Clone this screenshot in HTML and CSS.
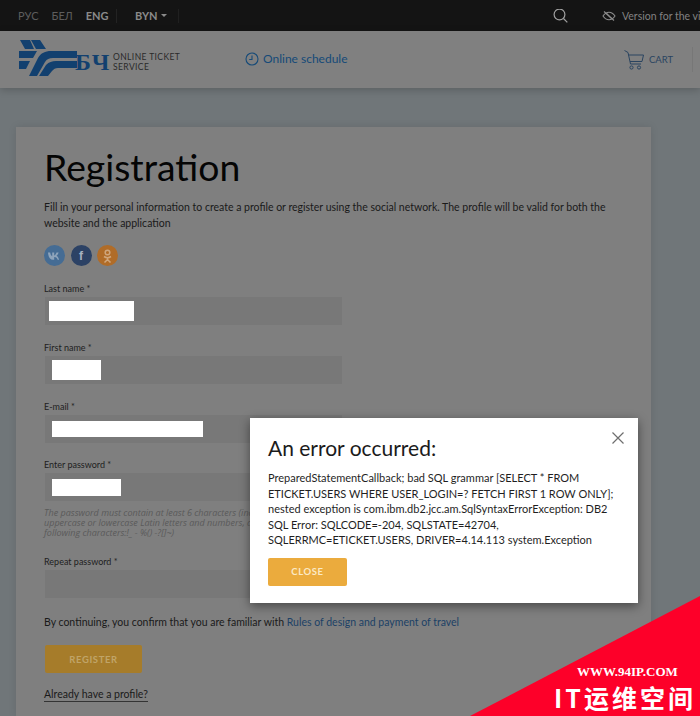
FILE: index.html
```html
<!DOCTYPE html>
<html lang="en">
<head>
<meta charset="utf-8">
<title>Registration</title>
<link rel="stylesheet" href="styles.css">
</head>
<body>
<div class="topbar">
  <div class="langs">
    <span class="lang">РУС</span>
    <span class="lang">БЕЛ</span>
    <span class="lang active">ENG</span>
  </div>
  <div class="currency">BYN<span class="caret"></span></div>
  <div class="top-right">
    <svg class="search-icon" width="15" height="15" viewBox="0 0 15 15" fill="none" stroke="#a0a0a0" stroke-width="1.200"><circle cx="6.500" cy="6.500" r="5.400"/><path d="M10.500 10.500l3.800 3.800"/></svg>
    <svg class="eye-icon" width="14" height="12" viewBox="0 0 14 12" fill="none" stroke="#8c8c8c" stroke-width="1.100"><path d="M1 6c2-3 4-3.800 6-3.800S11 3 13 6c-2 3-4 3.800-6 3.800S3 9 1 6z"/><path d="M4.500 3.500c2 2 3 3.500 5 5"/><path d="M2 1.500l10 9"/></svg>
    <span class="vision">Version for the visually impaired</span>
  </div>
</div>

<header class="header">
  <div class="logo">
    <svg width="58" height="38" viewBox="0 0 58 38" fill="#12406f">
      <path d="M1 1h10l4 9H6zM12 1h9l6 9H17z"/>
      <path d="M0 12h18l-4 7H0zM0 22h11l-4 8H0z"/>
      <path d="M10 37L19 19C22 14 26 12 32 12H58V19H34C30 19 28 20 26 23L18 37z"/>
      <path d="M20 37L27 26C30 23 33 22 37 22H58V29H39C36 29 35 30 33 32L29 37z"/>
    </svg>
    <span class="logo-mark">БЧ</span>
    <span class="logo-text">ONLINE TICKET<br>SERVICE</span>
  </div>
  <a class="schedule">
    <svg width="14" height="14" viewBox="0 0 14 14" fill="none" stroke="#154a78" stroke-width="1.100"><circle cx="7" cy="7" r="6"/><path d="M7 3.500V7.500H4.200"/></svg>
    Online schedule
  </a>
  <div class="cart">
    <svg width="20" height="20" viewBox="0 0 20 20" fill="none" stroke="#2a4460" stroke-width="1"><path d="M0.500 0.500l3.500 2 2.500 11.500H17"/><path d="M4.500 5H19.500l-1.500 6.500H6"/><circle cx="7.500" cy="17.500" r="1.600"/><circle cx="15" cy="17.500" r="1.600"/></svg>
    <span>CART</span>
  </div>
</header>

<main class="page">
  <section class="card">
    <h1 class="title">Registration</h1>
    <p class="intro">Fill in your personal information to create a profile or register using the social network. The profile will be valid for both the website and the application</p>
    <div class="socials">
      <span class="social vk">
        <svg width="13" height="8" viewBox="0 0 13 8" fill="#8ea4bb"><path d="M0 .5h2.200c.3 2 1.200 3.500 2 3.800V.5h2v3c1-.3 1.800-1.600 2.300-3h2.100c-.4 1.500-1.300 2.700-2.100 3.300.9.500 2 1.600 2.600 4H9.700c-.5-1.500-1.500-2.500-3.500-2.700v2.700H5C2 7.800.3 5 0 .5z"/></svg>
      </span>
      <span class="social fb">f</span>
      <span class="social ok">
        <svg width="9" height="14" viewBox="0 0 9 14" fill="none" stroke="#cfa67c" stroke-width="1.500"><circle cx="4.500" cy="3.500" r="2.300"/><path d="M1 7.500c2 1.300 5 1.300 7 0M4.500 9v1.500M1.500 13.500l3-3 3 3"/></svg>
      </span>
    </div>

    <div class="field">
      <label class="label">Last name *</label>
      <div class="input"><span class="redact redact-last"></span></div>
    </div>
    <div class="field">
      <label class="label">First name *</label>
      <div class="input"><span class="redact redact-first"></span></div>
    </div>
    <div class="field">
      <label class="label">E-mail *</label>
      <div class="input"><span class="redact redact-mail"></span></div>
    </div>
    <div class="field field-pass">
      <label class="label">Enter password *</label>
      <div class="input"><span class="redact redact-pass"></span></div>
      <p class="hint">The password must contain at least 6 characters (including<br>uppercase or lowercase Latin letters and numbers, and the<br>following characters:!_ - %() -?[]~)</p>
    </div>
    <div class="field field-repeat">
      <label class="label">Repeat password *</label>
      <div class="input"></div>
    </div>

    <p class="confirm">By continuing, you confirm that you are familiar with <a class="rules">Rules of design and payment of travel</a></p>
    <button class="btn btn-register">REGISTER</button>
    <a class="have-profile">Already have a profile?</a>
  </section>
</main>

<div class="modal">
  <svg class="close-x" width="12" height="12" viewBox="0 0 12 12" stroke="#6e6e6e" stroke-width="1.200"><path d="M.5.5l11 11M11.500.5l-11 11"/></svg>
  <h2 class="modal-title">An error occurred:</h2>
  <p class="modal-text">PreparedStatementCallback; bad SQL grammar [SELECT * FROM ETICKET.USERS WHERE USER_LOGIN=? FETCH FIRST 1 ROW ONLY]; nested exception is com.ibm.db2.jcc.am.SqlSyntaxErrorException: DB2 SQL Error: SQLCODE=-204, SQLSTATE=42704, SQLERRMC=ETICKET.USERS, DRIVER=4.14.113 system.Exception</p>
  <button class="btn btn-close">CLOSE</button>
</div>

<div class="watermark">
  <svg class="wm-tri" width="230" height="120" viewBox="0 0 230 120"><path d="M230 0V120H0z" fill="#fd0029"/></svg>
  <div class="wm-url">WWW.94IP.COM</div>
  <div class="wm-name">IT运维空间</div>
</div>
</body>
</html>
```

FILE: styles.css
```css
* { box-sizing: border-box; }
html, body { margin: 0; height: 716px; overflow: hidden; }
body { background: #707679; font-family: "Lato", sans-serif; color: #111; position: relative; }

.topbar { height: 31px; background: #141414; display: flex; align-items: center; padding-left: 18px; font-size: 11px; }
.langs { display: flex; gap: 13px; width: 99px; height: 14px; align-items: center; border-right: 1px solid #232323; }
.lang { color: #5d5d5d; }
.lang.active { color: #8a8a8a; font-weight: 700; }
.currency { width: 62px; height: 14px; padding-left: 18px; color: #8a8a8a; font-weight: 700; display: flex; align-items: center; gap: 3px; border-right: 1px solid #202020; }
.caret { width: 0; height: 0; border: 3px solid transparent; border-top: 3px solid #8a8a8a; border-bottom: 0; }
.top-right { margin-left: auto; display: flex; align-items: center; white-space: nowrap; width: 147px; flex: none; overflow: hidden; }
.search-icon { flex: none; margin-right: 34px; margin-top: -1px; }
.eye-icon { flex: none; margin-right: 6px; }
.vision { color: #828282; font-size: 10.500px; }

.header { height: 57px; background: #808080; display: flex; align-items: center; padding: 0 7px 0 19px; box-shadow: 0 2px 8px rgba(0,0,0,.2); position: relative; }
.logo { display: flex; align-items: center; width: 226px; }
.logo svg { flex: none; margin-top: -3px; }
.logo-mark { width: 31px; margin: 4px 0 0 -2px; font-family: "Liberation Serif", serif; font-weight: 700; font-size: 24px; line-height: 24px; color: #12406f; letter-spacing: 2px; white-space: nowrap; }
.logo-text { font-size: 8.500px; line-height: 10px; color: #2a2a2a; letter-spacing: .4px; margin: 5px 0 0 7px; white-space: nowrap; }
.schedule { display: flex; align-items: center; gap: 4px; color: #154a78; font-size: 12px; margin-top: -2px; }
.cart { margin-left: auto; display: flex; align-items: center; gap: 5px; height: 25px; padding-right: 19px; border-right: 1px solid #777; color: #2a4460; font-size: 9.500px; }

.page { padding: 39px 0 0 16px; height: 628px; overflow: hidden; }
.card { width: 635px; height: 589px; background: #7f7f7f; padding: 18px 28px; box-shadow: 0 0 8px rgba(0,0,0,.1); }
.title { font-size: 37.300px; line-height: 44px; font-weight: 400; margin: 0; color: #050505; }
.intro { margin: 10px 0 0; font-size: 10.500px; line-height: 16px; color: #1a1a1a; width: 571px; }
.socials { display: flex; gap: 5.500px; margin-top: 14px; }
.social { width: 21px; height: 21px; border-radius: 50%; display: flex; align-items: center; justify-content: center; }
.vk { background: #456c94; }
.fb { background: #2c4265; color: #a7b2c2; font: 700 12px "Liberation Sans", sans-serif; }
.ok { background: #b06c28; }

.field { margin-top: 17px; }
.field-pass { height: 69px; margin-top: 16px; }
.field-repeat { margin-top: 28px; }
.label { display: block; font-size: 9px; line-height: 11px; color: #1e1e1e; margin-bottom: 3px; }
.input { width: 297px; height: 28px; margin-left: 1px; background: #787878; display: flex; align-items: center; }
.redact { display: block; background: #fff; height: 20px; }
.redact-last { width: 85px; margin-left: 4px; }
.redact-first { width: 49px; margin-left: 7px; }
.redact-mail { width: 151px; margin-left: 7px; height: 16px; }
.redact-pass { width: 69px; margin-left: 7px; height: 17px; }
.hint { margin: 7px 0 0; font: italic 9px/10px "Open Sans", sans-serif; color: #5a5a5a; white-space: nowrap; }

.confirm { margin: 16px 0 0; font-size: 10.500px; line-height: 16px; color: #1a1a1a; }
.rules { color: #1c4166; }
.btn { display: block; border: 0; border-radius: 2px; font-family: "Lato", sans-serif; font-weight: 700; font-size: 9.500px; letter-spacing: .6px; padding: 0; height: 28px; }
.btn-register { margin: 15px 0 0 1px; width: 97px; background: #a67c2a; color: #c0a468; }
.have-profile { display: inline-block; margin-top: 15px; font-size: 10.500px; line-height: 13px; color: #1a1a1a; border-bottom: 1px solid #333; }

.modal { position: absolute; left: 250px; top: 418px; width: 388px; height: 185px; background: #fff; padding: 17px 18px; box-shadow: 0 3px 10px rgba(0,0,0,.45); }
.close-x { position: absolute; top: 14px; right: 14px; }
.modal-title { margin: 0; font-size: 21px; line-height: 26px; font-weight: 400; color: #1b1b1b; }
.modal-text { margin: 9px 0 0; font-size: 11px; line-height: 15.500px; color: #1f1f1f; width: 350px; }
.btn-close { margin-top: 10px; width: 79px; height: 28px; background: #ebab3d; color: #fbe9c6; }

.watermark { position: absolute; right: 0; bottom: 0; width: 230px; height: 120px; }
.wm-tri { position: absolute; inset: 0; }
.wm-url { position: absolute; left: 107px; top: 68px; font: 700 13px "Liberation Serif", serif; color: #fff; white-space: nowrap; }
.wm-name { position: absolute; left: 84px; top: 86px; font: 700 25px/30px "Noto Sans CJK SC", sans-serif; color: #fff; letter-spacing: 3px; white-space: nowrap; }
```
